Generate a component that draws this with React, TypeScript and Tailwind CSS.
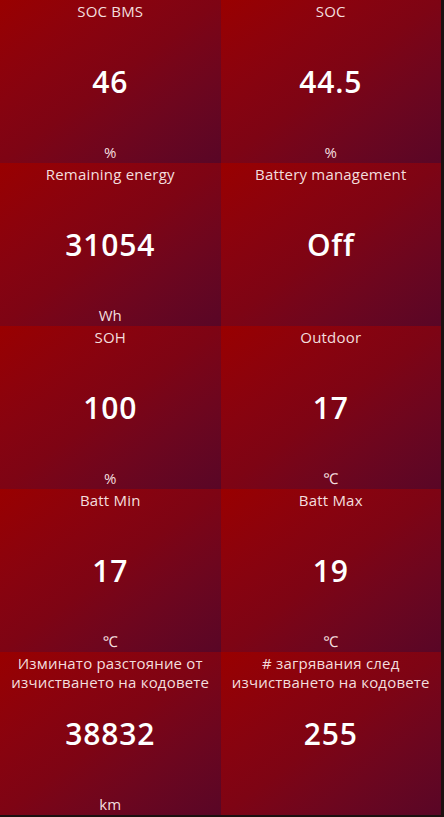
import React from "react";

type Tile = { title: string[]; value: string; unit?: string };

const tiles: Tile[] = [
  { title: ["SOC BMS"], value: "46", unit: "%" },
  { title: ["SOC"], value: "44.5", unit: "%" },
  { title: ["Remaining energy"], value: "31054", unit: "Wh" },
  { title: ["Battery management"], value: "Off" },
  { title: ["SOH"], value: "100", unit: "%" },
  { title: ["Outdoor"], value: "17", unit: "℃" },
  { title: ["Batt Min"], value: "17", unit: "℃" },
  { title: ["Batt Max"], value: "19", unit: "℃" },
  { title: ["Изминато разстояние от", "изчистването на кодовете"], value: "38832", unit: "km" },
  { title: ["# загрявания след", "изчистването на кодовете"], value: "255" },
];

export default function App() {
  return (
    <div
      className="w-[444px] h-[817px] bg-[#1c1010] overflow-hidden"
      style={{ fontFamily: '"Open Sans", "Noto Sans", sans-serif' }}
    >
      <div className="grid grid-cols-2 grid-rows-5 w-[441px] h-[815px]">
        {tiles.map((t, i) => (
          <div
            key={i}
            className="grid bg-gradient-to-br from-[#990000] via-[#7e0414] to-[#590626] text-center"
          >
            <div className="col-start-1 row-start-1 self-start pt-[2px] text-[15px] leading-[19px] tracking-[0.2px] text-[#f3dede]">
              {t.title.map((l, j) => (
                <div key={j}>{l}</div>
              ))}
            </div>
            <div className="col-start-1 row-start-1 self-center text-[30px] font-semibold leading-none text-white tracking-[0.8px]">
              {t.value}
            </div>
            {t.unit && (
              <div className="col-start-1 row-start-1 self-end pb-[1px] text-[15px] leading-[20px] text-[#f3dede]">
                {t.unit}
              </div>
            )}
          </div>
        ))}
      </div>
    </div>
  );
}
